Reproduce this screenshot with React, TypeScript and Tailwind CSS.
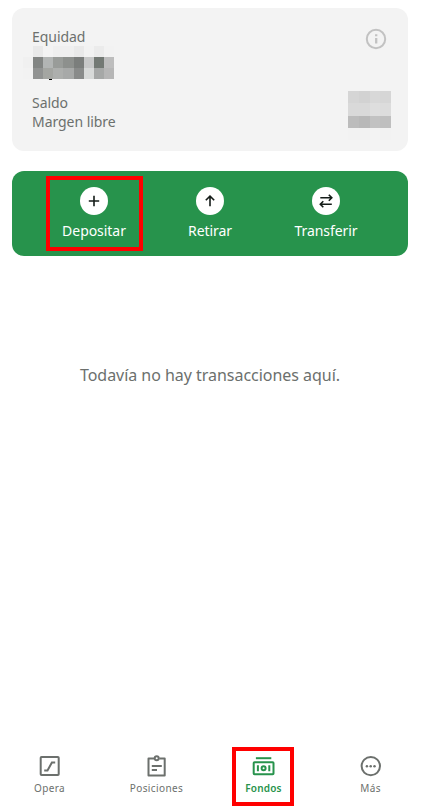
import React from 'react';

// Pixelated values: one color per cell, row by row
const EQUITY_ROWS = [
  { height: 'h-[11px]', cells: ['#f3f3f3', '#e9e9e9', '#f3f3f3', '#efefef', '#efefef', '#e9e9e9', '#f2f2f2', '#ebebeb', '#f2f2f2'] },
  { height: 'h-[11px]', cells: ['#f0f0f0', '#828583', '#b2b5b4', '#999c99', '#8d908d', '#7b7e7c', '#c7c8c8', '#737974', '#bdbdbd'] },
  { height: 'h-[11px]', cells: ['#f2f2f2', '#919392', '#a4a6a2', '#adafad', '#a7a9a8', '#898b8a', '#d8dad9', '#a6a8a7', '#b6b6b6'] },
];

const BALANCE_ROWS = [
  { height: 'h-[12px]', cells: ['#d5d5d5', '#d2d2d2', '#d8d8d8', '#d6d6d6'] },
  { height: 'h-[13px]', cells: ['#d9d9d9', '#d9d9d9', '#dedede', '#dcdcdc'] },
  { height: 'h-[12px]', cells: ['#bcbcbc', '#b8b8b8', '#c2c2c2', '#bfbfbf'] },
  { height: 'h-[12px]', cells: ['#f2f2f2', '#f2f2f2', '#f3f3f3', '#f2f2f2'] },
];

interface MosaicProps {
  rows: { height: string; cells: string[] }[];
  className: string;
}

const Mosaic: React.FC<MosaicProps> = ({ rows, className }) => (
  <div className={className}>
    {rows.map((row, i) => (
      <div key={i} className={`flex ${row.height}`}>
        {row.cells.map((color, j) => (
          <div key={j} className="flex-1" style={{ backgroundColor: color }} />
        ))}
      </div>
    ))}
  </div>
);

const InfoIcon = () => (
  <svg width="22" height="22" viewBox="0 0 22 22" fill="none" stroke="#c2c2c2" strokeWidth="2">
    <circle cx="11" cy="11" r="9.2" />
    <path d="M11.2 10v5.5M11.2 6.3v2" strokeWidth="2.3" />
  </svg>
);

const ACTIONS = [
  { label: 'Depositar', path: 'M14 8.8v10.4M8.8 14h10.4', highlighted: true },
  { label: 'Retirar', path: 'M14 19.3V9.3M9.8 13.3L14 9.1l4.2 4.2', highlighted: false },
  { label: 'Transferir', path: 'M8.3 10.8h11M16.8 7.8l3 3-3 3M19.8 17.3h-11M11.3 14.3l-3 3 3 3', highlighted: false },
];

const OperaIcon = () => (
  <svg width="24" height="24" viewBox="0 0 24 24" fill="none" stroke="currentColor" strokeWidth="2">
    <rect x="2.7" y="3" width="18" height="18" rx="0.8" />
    <path d="M6.2 16.5h3.3l4.4-8h3.3" />
  </svg>
);

const PosicionesIcon = () => (
  <svg width="24" height="24" viewBox="0 0 24 24" fill="none" stroke="currentColor" strokeWidth="2">
    <path d="M9 4.6H3.5v16.9h16.2V4.6h-5.4" strokeLinejoin="round" />
    <circle cx="11.7" cy="4.2" r="2" />
    <path d="M6.8 12h10M6.8 16h5.2" />
  </svg>
);

const FondosIcon = () => (
  <svg width="24" height="24" viewBox="0 0 24 24" fill="none" stroke="currentColor" strokeWidth="2">
    <path d="M3.9 4.2h15.4" />
    <rect x="1.7" y="8.3" width="19.8" height="12" rx="0.8" />
    <path d="M5.9 11.3v6M17.3 11.3v6" />
    <circle cx="11.6" cy="14.3" r="2" />
  </svg>
);

const MasIcon = () => (
  <svg width="24" height="24" viewBox="0 0 24 24" fill="none" stroke="currentColor" strokeWidth="2">
    <circle cx="11.8" cy="12.1" r="9.2" />
    <g fill="currentColor" stroke="none">
      <circle cx="7.9" cy="12.3" r="1.25" />
      <circle cx="11.7" cy="12.3" r="1.25" />
      <circle cx="15.5" cy="12.3" r="1.25" />
    </g>
  </svg>
);

const TABS = [
  { label: 'Opera', Icon: OperaIcon, active: false },
  { label: 'Posiciones', Icon: PosicionesIcon, active: false },
  { label: 'Fondos', Icon: FondosIcon, active: true },
  { label: 'Más', Icon: MasIcon, active: false },
];

const App: React.FC = () => {
  return (
    <div className="flex h-[809px] w-[423px] flex-col overflow-hidden bg-white font-['Noto_Sans',sans-serif] text-[#6c706d]">
      {/* BALANCE CARD */}
      <section className="ml-3 mt-[7.5px] flex h-[143.5px] w-[396px] shrink-0 justify-between rounded-xl bg-[#f3f3f3] pl-5 pr-[17px] pt-[19.5px]">
        <div className="text-sm leading-[19px] tracking-[-0.05px]">
          <div>Equidad</div>
          <div className="relative -ml-[9px]">
            <Mosaic rows={EQUITY_ROWS} className="w-[91px]" />
            <span className="absolute bottom-[-1px] left-[26px] h-px w-[3px] bg-black" />
          </div>
          <div className="mt-[14px]">Saldo</div>
          <div>Margen libre</div>
        </div>
        <div className="flex flex-col items-end">
          <div className="mr-1 mt-px">
            <InfoIcon />
          </div>
          <Mosaic rows={BALANCE_ROWS} className="mt-[41px] w-[43px]" />
        </div>
      </section>

      {/* ACTIONS */}
      <section className="ml-3 mt-5 flex h-[85.4px] w-[396px] shrink-0 rounded-xl bg-[#27934c] px-6">
        {ACTIONS.map(action => (
          <button key={action.label} className="relative flex w-[116px] flex-col items-center pt-4 text-sm leading-[19px] tracking-[-0.05px] text-white">
            <svg width="28" height="28" viewBox="0 0 28 28" fill="none">
              <circle cx="14" cy="14" r="14" fill="white" />
              <path d={action.path} stroke="#151c18" strokeWidth="1.6" />
            </svg>
            <span className="mt-[6px]">{action.label}</span>
            {action.highlighted && (
              <span className="absolute left-[10px] top-[5px] h-[75px] w-[97px] border-4 border-[#ff0000]" />
            )}
          </button>
        ))}
      </section>

      {/* EMPTY STATE */}
      <p className="mt-[107px] w-[420px] text-center text-base leading-6 tracking-[-0.03px]">Todavía no hay transacciones aquí.</p>

      {/* TAB BAR */}
      <nav className="-ml-1 mt-auto flex h-[62px] w-[428px] shrink-0">
        {TABS.map(({ label, Icon, active }) => (
          <button
            key={label}
            className={`relative flex w-[107px] flex-col items-center pt-[7px] text-[10px] leading-[14px] ${active ? 'font-semibold tracking-[0.2px] text-[#27934c]' : 'font-normal tracking-[0.4px]'}`}
          >
            <Icon />
            <span className="mt-[3px]">{label}</span>
            {active && <span className="absolute left-[22px] top-0 h-[59px] w-[62px] border-4 border-[#ff0000]" />}
          </button>
        ))}
      </nav>
    </div>
  );
};

export default App;
